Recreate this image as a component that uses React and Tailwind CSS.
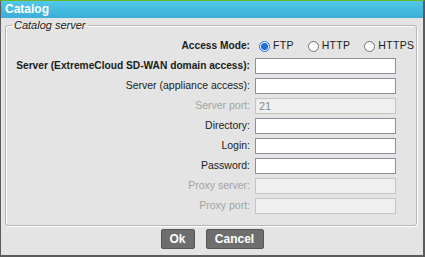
import { useState } from 'react';

const rows = [
  { label: 'Server (ExtremeCloud SD-WAN domain access):', bold: true },
  { label: 'Server (appliance access):' },
  { label: 'Server port:', disabled: true, value: '21' },
  { label: 'Directory:' },
  { label: 'Login:' },
  { label: 'Password:', password: true },
  { label: 'Proxy server:', disabled: true },
  { label: 'Proxy port:', disabled: true },
];

function Radio({ checked, label, onClick }) {
  return (
    <label className="flex items-center cursor-pointer" onClick={onClick}>
      <span
        className={`w-[11px] h-[11px] rounded-full border flex items-center justify-center bg-white ${
          checked ? 'border-[#1a6fd8]' : 'border-[#6e6e6e]'
        }`}
      >
        {checked && <span className="w-[7px] h-[7px] rounded-full bg-[#1a6fd8]" />}
      </span>
      <span className="ml-[3px] tracking-[0.3px]">{label}</span>
    </label>
  );
}

export default function App() {
  const [mode, setMode] = useState('FTP');

  return (
    <div className="w-[425px] h-[257px] bg-[#e4e4e4] border-t border-t-[#6fb52c] border-l border-l-[#5c5c5c] border-r-2 border-r-[#5c5c5c] border-b-2 border-b-[#5c5c5c] flex flex-col text-[10.5px] text-[#1b1b1b] font-['Liberation_Sans',Arial,sans-serif]">
      <div className="h-[17px] bg-gradient-to-b from-[#52c9e8] to-[#3aaed8] text-white font-bold text-[12px] leading-[17px] pl-[4px]">
        Catalog
      </div>

      <fieldset className="mt-[1px] ml-[4px] w-[412px] border border-[#b5b5b5] rounded-[3px] shadow-[inset_1px_1px_0_#ffffff,1px_1px_0_#ffffff] px-[2px] pb-[9px]">
        <legend className="ml-[4px] px-[2px] italic text-[11px] text-[#1b1b1b] leading-[13px]">Catalog server</legend>

        <div className="flex items-center h-[20px] mt-[4px]">
          <div className="w-[242px] text-right font-bold text-[10.2px]">Access Mode:</div>
          <div className="ml-[9px] flex items-center gap-[14px]">
            {['FTP', 'HTTP', 'HTTPS'].map((m) => (
              <Radio key={m} label={m} checked={mode === m} onClick={() => setMode(m)} />
            ))}
          </div>
        </div>

        {rows.map((r) => (
          <div key={r.label} className="flex items-center h-[20px]">
            <div
              className={`w-[242px] text-right whitespace-nowrap ${r.bold ? 'font-bold text-[10.2px]' : ''} ${
                r.disabled ? 'text-[#a3a3a3]' : ''
              }`}
            >
              {r.label}
            </div>
            <input
              type={r.password ? 'password' : 'text'}
              disabled={r.disabled}
              defaultValue={r.value}
              className={`ml-[5px] w-[141px] h-[16px] px-[3px] text-[11px] outline-none border ${
                r.disabled
                  ? 'bg-[#efefef] border-[#c4c4c4] text-[#8a8a8a]'
                  : 'bg-white border-[#8f8f9d]'
              }`}
            />
          </div>
        ))}
      </fieldset>

      <div className="flex justify-center gap-[11px] mt-[3px]">
        <button className="w-[34px] h-[20px] bg-[#6e6e6e] border border-[#555] rounded-[2px] text-white font-bold text-[12px]">
          Ok
        </button>
        <button className="w-[58px] h-[20px] bg-[#6e6e6e] border border-[#555] rounded-[2px] text-white font-bold text-[12px]">
          Cancel
        </button>
      </div>
    </div>
  );
}
